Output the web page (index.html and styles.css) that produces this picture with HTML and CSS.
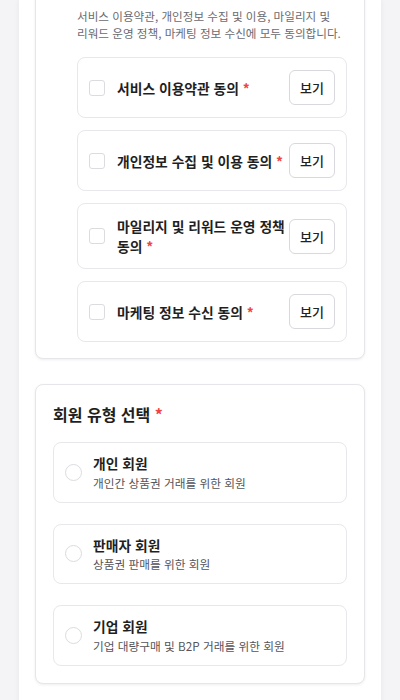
FILE: index.html
```html
<!DOCTYPE html>
<html lang="ko">
  <head>
    <title>회원가입</title>
    <meta charset="utf-8" />
    <meta name="viewport" content="width=device-width, initial-scale=1.0" />
    <link rel="stylesheet" href="styles.css">
  </head>
  <body>
    <div class="page">
      <section class="card terms">
        <p class="terms-desc">서비스 이용약관, 개인정보 수집 및 이용, 마일리지 및 리워드 운영 정책, 마케팅 정보 수신에 모두 동의합니다.</p>
        <div class="terms-list">
          <div class="term">
            <span class="checkbox"></span>
            <span class="term-label required">서비스 이용약관 동의</span>
            <button class="view-btn">보기</button>
          </div>
          <div class="term">
            <span class="checkbox"></span>
            <span class="term-label required">개인정보 수집 및 이용 동의</span>
            <button class="view-btn">보기</button>
          </div>
          <div class="term">
            <span class="checkbox"></span>
            <span class="term-label required">마일리지 및 리워드 운영 정책 동의</span>
            <button class="view-btn">보기</button>
          </div>
          <div class="term">
            <span class="checkbox"></span>
            <span class="term-label required">마케팅 정보 수신 동의</span>
            <button class="view-btn">보기</button>
          </div>
        </div>
      </section>

      <section class="card">
        <h2 class="card-title required">회원 유형 선택</h2>
        <div class="options">
          <label class="option">
            <span class="radio"></span>
            <span class="option-text">
              <span class="option-name">개인 회원</span>
              <span class="option-desc">개인간 상품권 거래를 위한 회원</span>
            </span>
          </label>
          <label class="option">
            <span class="radio"></span>
            <span class="option-text">
              <span class="option-name">판매자 회원</span>
              <span class="option-desc">상품권 판매를 위한 회원</span>
            </span>
          </label>
          <label class="option">
            <span class="radio"></span>
            <span class="option-text">
              <span class="option-name">기업 회원</span>
              <span class="option-desc">기업 대량구매 및 B2P 거래를 위한 회원</span>
            </span>
          </label>
        </div>
      </section>
    </div>
  </body>
</html>
```

FILE: styles.css
```css
html,
body {
  margin: 0;
  padding: 0;
  background: #f4f4f6;
  font-family: "Noto Sans CJK KR", "Noto Sans", sans-serif;
  color: #1f1f1f;
  word-break: keep-all;
}
.page {
  width: 362px;
  min-height: 100vh;
  margin: 0 auto;
  padding: 0 16px 16px;
  box-sizing: border-box;
  background: #fff;
  box-shadow: 0 0 6px rgba(0, 0, 0, 0.06);
  overflow: hidden;
}
.card {
  border: 1px solid #e6e6ea;
  border-radius: 8px;
  padding: 17px;
  box-shadow: 0 1px 3px rgba(0, 0, 0, 0.07);
  background: #fff;
  margin-bottom: 25px;
}
.terms {
  margin-top: -9px;
  padding-top: 16px;
  padding-bottom: 16px;
}
.required::after {
  content: " *";
  color: #ef4444;
  font-weight: 700;
}
.terms-desc {
  margin: 0 0 15px 24px;
  font-size: 11.6px;
  line-height: 17px;
  color: #6b6b70;
}
.terms-list {
  display: flex;
  flex-direction: column;
  gap: 12px;
  margin-left: 24px;
}
.term {
  display: flex;
  align-items: center;
  gap: 12px;
  padding: 12px 11px;
  border: 1px solid #e8e8ec;
  border-radius: 8px;
}
.checkbox {
  flex: none;
  width: 16px;
  height: 16px;
  box-sizing: border-box;
  border: 1px solid #dcdce0;
  border-radius: 3px;
}
.term-label {
  flex: 1;
  font-size: 13.8px;
  line-height: 20px;
  font-weight: 700;
  margin-right: -8px;
}
.view-btn {
  flex: none;
  padding: 8px 10px;
  border: 1px solid #d8d8de;
  border-radius: 6px;
  background: #fff;
  font: 500 13px/17px "Noto Sans CJK KR", sans-serif;
  color: #222;
}
.card-title {
  margin: 0 0 16px;
  font-size: 16px;
  line-height: 24px;
  font-weight: 700;
}
.options {
  display: flex;
  flex-direction: column;
  gap: 21px;
}
.option {
  display: flex;
  align-items: center;
  gap: 11px;
  padding: 11px;
  border: 1px solid #e8e8ec;
  border-radius: 8px;
}
.radio {
  flex: none;
  width: 17px;
  height: 17px;
  box-sizing: border-box;
  border: 1px solid #dcdce0;
  border-radius: 50%;
}
.option-text {
  display: flex;
  flex-direction: column;
}
.option-name {
  font-size: 13.8px;
  line-height: 19.5px;
  font-weight: 700;
}
.option-desc {
  font-size: 11.7px;
  line-height: 17px;
  color: #55555a;
}
```
